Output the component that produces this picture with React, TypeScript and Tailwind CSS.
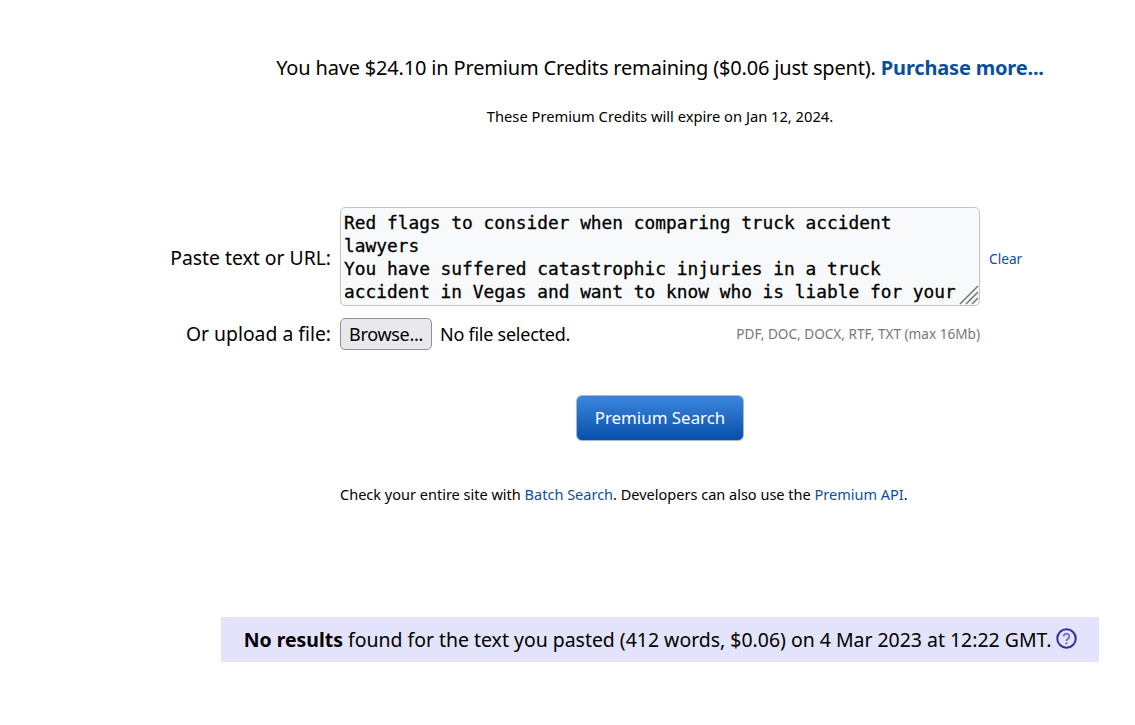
export default function App() {
  const text =
    "Red flags to consider when comparing truck accident lawyers\nYou have suffered catastrophic injuries in a truck accident in Vegas and want to know who is liable for your injuries and damages.";
  return (
    <div className="min-h-[725px] bg-white text-black font-['Noto_Sans','Open_Sans',sans-serif] overflow-hidden">
      <div className="ml-[221px] w-[878px] flex flex-col">
        <p className="mt-[54px] h-[28px] text-center text-[20px] leading-[28px] tracking-[-0.175px]">
          You have $24.10 in Premium Credits remaining ($0.06 just spent).{" "}
          <a className="font-bold text-[#0a4f9e]">Purchase more...</a>
        </p>
        <p className="mt-[23px] h-[22px] text-center text-[14.7px] leading-[22px]">
          These Premium Credits will expire on Jan 12, 2024.
        </p>
        <div className="mt-[80px] flex items-center h-[99px]">
          <label className="flex w-[110px] shrink-0 justify-end whitespace-nowrap pt-[3px] text-[19.35px]">
            Paste text or URL:
          </label>
          <div className="relative ml-[9px] h-[99px] w-[640px] shrink-0">
            <textarea
              readOnly
              defaultValue={text}
              className="block h-full w-full resize-none overflow-hidden rounded-[5px] border border-[#c4c4c4] bg-[#f8f9fa] pl-[3px] pr-[20px] py-[3px] font-['DejaVu_Sans_Mono',monospace] text-[17.83px] leading-[23px] text-black outline-none [-webkit-text-stroke:0.3px_black]"
            />
            <svg className="absolute bottom-[1px] right-[1px]" width="20" height="20" viewBox="0 0 20 20" stroke="#777777" strokeWidth="1.6" fill="none">
              <path d="M1 19 L19 1" />
              <path d="M7 19 L19 7" />
              <path d="M13 19 L19 13" />
            </svg>
          </div>
          <a className="ml-[9px] pt-[5px] text-[13.7px] text-[#0a4f9e]">Clear</a>
        </div>
        <div className="mt-[12px] flex items-center h-[32px]">
          <label className="flex w-[110px] shrink-0 justify-end whitespace-nowrap text-[19.35px]">
            Or upload a file:
          </label>
          <div className="ml-[9px] flex w-[640px] items-center">
            <button className="h-[32px] w-[92px] rounded-[5px] border border-[#8f8f9d] bg-[#e9e9ed] text-[18px] tracking-[-0.3px]">
              Browse...
            </button>
            <span className="ml-[8px] text-[18px] tracking-[-0.25px]">No file selected.</span>
            <span className="ml-auto text-[13.6px] text-[#777777]">PDF, DOC, DOCX, RTF, TXT (max 16Mb)</span>
          </div>
        </div>
        <div className="mt-[45px] flex justify-center">
          <button className="h-[46px] w-[168px] rounded-[6px] border border-[#a9b8c9] bg-gradient-to-b from-[#3b86e0] to-[#0450a8] text-[16.9px] text-white">
            Premium Search
          </button>
        </div>
        <p className="ml-[119px] mt-[42px] h-[22px] text-[14.53px] leading-[22px]">
          Check your entire site with <a className="text-[#0a4f9e]">Batch Search</a>. Developers can also use the{" "}
          <a className="text-[#0a4f9e]">Premium API</a>.
        </p>
        <div className="mt-[112px] flex h-[45px] items-center justify-center bg-[#e3e3fb] pl-[1px] text-[19.45px]">
          <span>
            <b>No results</b> found for the text you pasted (412 words, $0.06) on 4 Mar 2023 at 12:22 GMT.
          </span>
          <svg className="ml-[5px] -mt-[3px]" width="21" height="21" viewBox="0 0 20 20" fill="none">
            <circle cx="10" cy="10" r="8.8" stroke="#2f2fa0" strokeWidth="1.9" />
            <path d="M7.3 8 a2.7 2.6 0 1 1 4.2 2.2 c-1 .7 -1.5 1 -1.5 2.1" stroke="#6a6ac0" strokeWidth="1.6" />
            <circle cx="10" cy="14.6" r="1.1" fill="#6a6ac0" />
          </svg>
        </div>
      </div>
    </div>
  );
}
